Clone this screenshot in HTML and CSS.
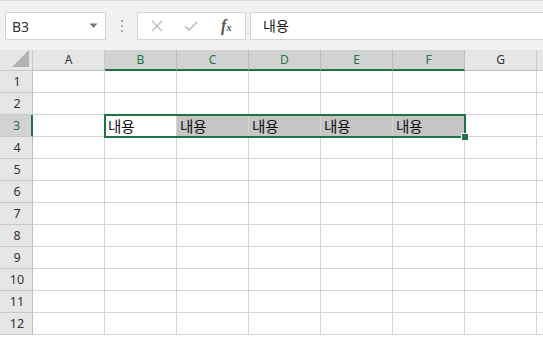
FILE: index.html
```html
<!DOCTYPE html>
<html lang="ko">
<head>
<meta charset="utf-8">
<link rel="stylesheet" href="styles.css">
</head>
<body>
<div class="toolbar">
  <div class="namebox">
    <span class="ref">B3</span>
    <svg class="dd" width="9" height="6" viewBox="0 0 9 6"><path d="M0.5 0.5 L8.5 0.5 L4.5 5 Z" fill="#777"/></svg>
  </div>
  <div class="dots"><span></span><span></span><span></span></div>
  <div class="fbtns">
    <svg class="ic" width="12" height="12" viewBox="0 0 12 12"><path d="M1 1 L11 11 M11 1 L1 11" stroke="#bdbdbd" stroke-width="1.3" fill="none"/></svg>
    <svg class="ic" width="14" height="12" viewBox="0 0 14 12"><path d="M1 6.5 L5 10 L13 2" stroke="#c4c4c4" stroke-width="1.8" fill="none"/></svg>
    <span class="fx"><i>f</i><sub>x</sub></span>
  </div>
  <div class="finput">내용</div>
</div>
<div class="sheet">
  <div class="grid">
    <div class="corner"><svg width="18" height="17" viewBox="0 0 18 17"><path d="M17 0 L17 17 L0 17 Z" fill="#b3b3b3"/></svg></div>
    <div class="ch">A</div>
    <div class="ch sel">B</div>
    <div class="ch sel">C</div>
    <div class="ch sel">D</div>
    <div class="ch sel">E</div>
    <div class="ch sel">F</div>
    <div class="ch">G</div>
    <div class="ch last"></div>

    <div class="rh">1</div><div class="c"></div><div class="c"></div><div class="c"></div><div class="c"></div><div class="c"></div><div class="c"></div><div class="c"></div><div class="c last"></div>
    <div class="rh">2</div><div class="c"></div><div class="c"></div><div class="c"></div><div class="c"></div><div class="c"></div><div class="c"></div><div class="c"></div><div class="c last"></div>
    <div class="rh sel">3</div><div class="c"></div><div class="c">내용</div><div class="c hl">내용</div><div class="c hl">내용</div><div class="c hl">내용</div><div class="c hl">내용</div><div class="c"></div><div class="c last"></div>
    <div class="rh">4</div><div class="c"></div><div class="c"></div><div class="c"></div><div class="c"></div><div class="c"></div><div class="c"></div><div class="c"></div><div class="c last"></div>
    <div class="rh">5</div><div class="c"></div><div class="c"></div><div class="c"></div><div class="c"></div><div class="c"></div><div class="c"></div><div class="c"></div><div class="c last"></div>
    <div class="rh">6</div><div class="c"></div><div class="c"></div><div class="c"></div><div class="c"></div><div class="c"></div><div class="c"></div><div class="c"></div><div class="c last"></div>
    <div class="rh">7</div><div class="c"></div><div class="c"></div><div class="c"></div><div class="c"></div><div class="c"></div><div class="c"></div><div class="c"></div><div class="c last"></div>
    <div class="rh">8</div><div class="c"></div><div class="c"></div><div class="c"></div><div class="c"></div><div class="c"></div><div class="c"></div><div class="c"></div><div class="c last"></div>
    <div class="rh">9</div><div class="c"></div><div class="c"></div><div class="c"></div><div class="c"></div><div class="c"></div><div class="c"></div><div class="c"></div><div class="c last"></div>
    <div class="rh">10</div><div class="c"></div><div class="c"></div><div class="c"></div><div class="c"></div><div class="c"></div><div class="c"></div><div class="c"></div><div class="c last"></div>
    <div class="rh">11</div><div class="c"></div><div class="c"></div><div class="c"></div><div class="c"></div><div class="c"></div><div class="c"></div><div class="c"></div><div class="c last"></div>
    <div class="rh">12</div><div class="c"></div><div class="c"></div><div class="c"></div><div class="c"></div><div class="c"></div><div class="c"></div><div class="c"></div><div class="c last"></div>
  </div>
  <div class="selbox"><div class="handle"></div></div>
</div>
</body>
</html>
```

FILE: styles.css
```css
html, body {
  margin: 0;
  padding: 0;
  width: 543px;
  height: 339px;
  overflow: hidden;
  background: #ffffff;
  font-family: "Noto Sans", "Noto Sans CJK KR", sans-serif;
}

.toolbar {
  height: 50px;
  box-sizing: border-box;
  background: #f1f1f1;
  border-top: 1px solid #dcdcdc;
  display: flex;
  align-items: flex-start;
  padding-top: 11px;
}

.namebox {
  margin-left: 5px;
  width: 101px;
  height: 28px;
  box-sizing: border-box;
  background: #fff;
  border: 1px solid #d4d4d4;
  display: flex;
  align-items: center;
  justify-content: space-between;
  padding: 0 7px 0 6px;
}

.ref {
  font-family: "Noto Sans", sans-serif;
  font-size: 14px;
  color: #333;
}

.dots {
  width: 31px;
  height: 28px;
  display: flex;
  flex-direction: column;
  align-items: center;
  justify-content: center;
  gap: 3px;
}

.dots span {
  width: 2px;
  height: 2px;
  background: #a8a8a8;
}

.fbtns {
  width: 109px;
  height: 28px;
  box-sizing: border-box;
  background: #fff;
  border: 1px solid #d4d4d4;
  display: flex;
  align-items: center;
  padding-left: 13px;
  gap: 21px;
}

.fx {
  font-family: "Liberation Serif", serif;
  font-size: 16px;
  font-weight: bold;
  color: #555;
  margin-left: 2px;
  line-height: 1;
}

.fx i {
  font-style: italic;
}

.fx sub {
  font-size: 11px;
  font-style: italic;
  vertical-align: baseline;
  margin-left: 0;
}

.finput {
  margin-left: 4px;
  flex: 1;
  height: 28px;
  box-sizing: border-box;
  background: #fff;
  border: 1px solid #d4d4d4;
  border-right: none;
  padding-left: 12px;
  font-family: "Noto Sans CJK KR", sans-serif;
  font-size: 14px;
  line-height: 25px;
  color: #222;
}

.sheet {
  position: relative;
}

.grid {
  display: grid;
  grid-template-columns: 33px repeat(7, 72px) 1fr;
  grid-template-rows: 21px repeat(12, 22px);
}

.corner {
  background: #e6e6e6;
  border-right: 1px solid #c8c8c8;
  border-bottom: 1px solid #c8c8c8;
  box-sizing: border-box;
  display: flex;
  align-items: flex-end;
  justify-content: flex-end;
  padding: 0 2px 3px 0;
}

.ch {
  background: #e6e6e6;
  border-right: 1px solid #c8c8c8;
  border-bottom: 1px solid #c0c0c0;
  box-sizing: border-box;
  text-align: center;
  font-size: 12px;
  line-height: 20px;
  color: #333;
}

.ch.sel {
  background: #d2d2d2;
  color: #217346;
  border-bottom: 2px solid #217346;
  border-right-color: #bdbdbd;
}

.ch.last {
  border-right: none;
}

.rh {
  background: #e6e6e6;
  border-right: 1px solid #c0c0c0;
  border-bottom: 1px solid #c8c8c8;
  box-sizing: border-box;
  text-align: center;
  font-size: 12.5px;
  line-height: 21px;
  color: #333;
  padding-left: 2px;
}

.rh.sel {
  background: #d2d2d2;
  color: #217346;
  border-right: 2px solid #217346;
}

.c {
  border-right: 1px solid #d4d4d4;
  border-bottom: 1px solid #d4d4d4;
  box-sizing: border-box;
  font-family: "Noto Sans CJK KR", sans-serif;
  font-size: 14.5px;
  line-height: 21px;
  color: #111;
  padding-left: 3px;
  white-space: nowrap;
  overflow: hidden;
}

.c.hl {
  background: #c6c6c6;
}

.c.last {
  border-right: none;
}

.selbox {
  position: absolute;
  left: 104px;
  top: 64px;
  width: 362px;
  height: 24px;
  box-sizing: border-box;
  border: 2px solid #217346;
}

.handle {
  position: absolute;
  right: -5px;
  bottom: -5px;
  width: 6px;
  height: 6px;
  background: #217346;
  border: 1px solid #fff;
}
```
